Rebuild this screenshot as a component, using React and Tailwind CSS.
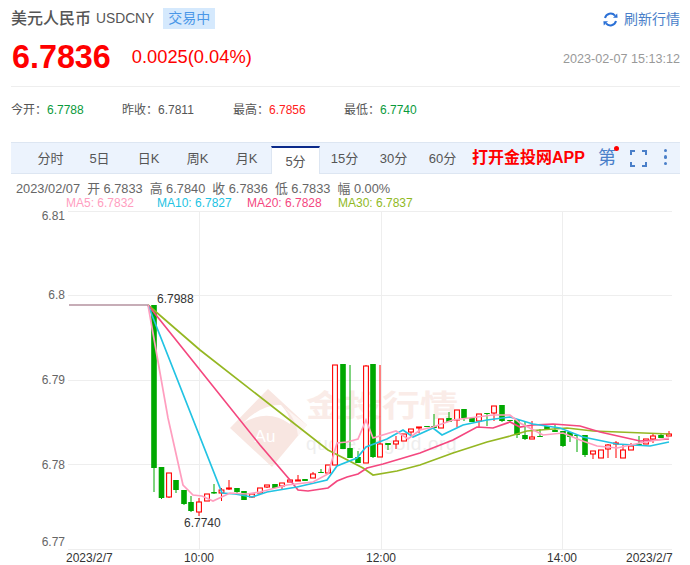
const FONT = "font-['Liberation_Sans','Noto_Sans_CJK_SC',sans-serif]";

// [x, g|r, bodyTop, bodyBottom, high, low]
const candles = [
  [154, 'g', 305, 468, 305, 492], [161.5, 'g', 467, 498, 467, 499], [169, 'r', 473, 497, 473, 498], [176, 'g', 480, 490, 480, 493],
  [184, 'g', 490, 504, 490, 505], [191, 'g', 502, 511, 496, 512], [199, 'r', 502, 512, 498, 516], [207, 'r', 494, 501, 494, 501],
  [214, 'g', 492, 493.5, 484, 494], [221.5, 'r', 490, 493, 488, 501], [229, 'r', 488, 489, 480, 490], [237, 'g', 488, 492, 488, 493],
  [244, 'g', 491, 500, 491, 500], [252, 'r', 494, 497, 494, 498], [260, 'r', 488, 493, 488, 493], [267, 'r', 485, 487, 485, 488],
  [275, 'g', 484, 488, 484, 488], [282, 'r', 483, 486, 483, 489], [290, 'r', 480, 482, 480, 482], [298, 'r', 480, 481, 475, 481],
  [305, 'g', 479, 481, 479, 481], [313, 'r', 474, 478, 472, 478], [321, 'g', 472, 473, 469, 473], [328, 'r', 465, 473, 465, 473],
  [335, 'r', 365, 465, 365, 465], [343, 'g', 364, 449, 364, 449], [350, 'g', 448, 458, 365, 458], [358, 'g', 457, 463, 451, 463],
  [366, 'r', 366, 463, 365, 463], [373, 'g', 364, 457, 364, 458], [380, 'r', 444, 457, 365, 457], [388, 'g', 443, 445, 443, 450],
  [396, 'r', 441, 444, 436, 449], [404, 'r', 434, 441, 434, 441], [411, 'r', 429, 432, 429, 437], [419, 'r', 427, 428, 427, 433],
  [427, 'g', 426, 427, 426, 427], [434, 'g', 426, 428, 414, 428], [441, 'r', 419, 428, 419, 428], [449, 'g', 418, 422, 412, 422],
  [457, 'r', 410, 420, 410, 427], [464, 'g', 409, 418, 409, 421], [472, 'g', 418, 422, 418, 422], [479, 'r', 414, 421, 414, 427],
  [487, 'g', 413, 414, 413, 426], [494, 'r', 406, 413, 406, 421], [502, 'g', 405, 421, 405, 422], [510, 'g', 420, 421, 420, 423],
  [517, 'g', 420, 435, 420, 438], [525, 'g', 435, 439, 421, 440], [532, 'r', 437, 439, 421, 439], [540, 'g', 436, 437, 429, 437],
  [547, 'g', 426, 430, 426, 430], [555, 'g', 430, 432, 425, 432], [563, 'g', 431, 446, 431, 447], [570, 'g', 432, 437, 432, 442],
  [577, 'g', 435, 436, 435, 452], [585, 'g', 435, 455, 435, 457], [593, 'r', 451, 454, 451, 459], [601, 'r', 450, 458, 450, 458],
  [608, 'r', 445, 449, 444, 458], [616, 'r', 443, 444, 441, 458], [623, 'r', 450, 458, 445, 458], [631, 'r', 446, 450, 443, 450],
  [639, 'g', 444, 445, 436, 445], [646, 'r', 439, 444, 439, 444], [653, 'r', 436, 439, 433, 443], [661, 'g', 435, 438, 433, 438],
  [669, 'r', 434, 436, 431, 436],
];

const ma30 = '148,305 200,350 328,450 363,468 373,475 397,471 420,465 453,453 487,442 510,436 527,431 567,428 593,431 669,434';
const ma20 = '148,305 260,445 290,480 298,490 308,491 328,488 337,481 347,477 358,474 367,468 383,464 420,453 453,440 477,427 493,428 510,422 520,427 533,425 553,424 580,426 600,432 640,441 669,439';
const ma10 = '148,305 222,493 235,494 252,497 267,492 297,487 327,480 337,466 357,458 366,447 387,439 403,430 413,437 433,428 442,435 463,425 487,420 510,417 533,424 560,428 583,437 617,444 650,446 669,442';
const ma5 = '148,305 168,418 183,485 193,495 202,496 213,501 230,493 247,494 260,492 287,485 313,482 328,474 337,443 347,442 358,439 366,420 373,438 396,431 408,439 420,430 433,427 453,420 477,417 493,415 510,415 520,423 543,435 563,433 580,440 597,446 617,448 640,443 669,438';

const tabs = ['分时', '5日', '日K', '周K', '月K', '5分', '15分', '30分', '60分'];

function Chart() {
  return (
    <svg width="690" height="355" viewBox="0 210 690 355" className="block">
      {/* 网格 */}
      {[211, 295, 380, 464, 549].map((y) => <line key={y} x1="68" x2="672" y1={y + 0.5} y2={y + 0.5} stroke="#eeeeee" />)}
      {[199, 381, 562].map((x) => <line key={x} x1={x + 0.5} x2={x + 0.5} y1="211" y2="549" stroke="#eeeeee" />)}

      {/* 水印 */}
      <g>
        <path d="M268 389 L307 425 L272 467 L230 428 Z" fill="#f8e6e1" />
        <path d="M243 423 Q262 404 281 405 Q291 416 290 424 Q268 408 243 423 Z" fill="#ffffff" />
        <path d="M281 405 L307 425 L298 436 Q296 416 281 405 Z" fill="#fdf5f3" />
        <text x="265" y="442" fontSize="17" fill="#ffffff" textAnchor="middle" fontFamily="Liberation Sans">Au</text>
        <text transform="translate(306 416) scale(1 0.78)" fontSize="38" fontWeight="700" fill="#faecE8" fontFamily="Noto Sans CJK SC">金投行情</text>
        <text x="306" y="450" fontSize="19" fill="#eeeeee" fontFamily="Liberation Sans" letterSpacing="0.6">quote.cngold.org</text>
      </g>

      {/* K线 */}
      {candles.map(([x, c, t, b, hi, lo]) => {
        const color = c === 'g' ? '#00a800' : '#ff0000';
        return (
          <g key={x}>
            <line x1={x} x2={x} y1={hi} y2={lo} stroke={color} strokeWidth="1" />
            {c === 'g'
              ? <rect x={x - 2.8} y={t} width="5.6" height={b - t} fill={color} />
              : <rect x={x - 2.4} y={t} width="4.8" height={b - t} fill="#ffffff" stroke={color} strokeWidth="1.1" />}
          </g>
        );
      })}

      {/* 均线 */}
      <polyline points={ma30} fill="none" stroke="#95b723" strokeWidth="1.7" />
      <polyline points={ma20} fill="none" stroke="#f4477f" strokeWidth="1.7" />
      <polyline points={ma10} fill="none" stroke="#22c3e3" strokeWidth="1.7" />
      <polyline points={ma5} fill="none" stroke="#ff9ebf" strokeWidth="1.7" />
      <line x1="69" x2="148" y1="305" y2="305" stroke="#b5929f" strokeWidth="1.7" />

      <g fontFamily="Liberation Sans" fontSize="12" fill="#666666" textAnchor="end">
        <text x="65" y="220">6.81</text>
        <text x="65" y="299">6.8</text>
        <text x="65" y="384">6.79</text>
        <text x="65" y="469">6.78</text>
        <text x="65" y="546">6.77</text>
      </g>
      <g fontFamily="Liberation Sans" fontSize="12" fill="#333333">
        <text x="157" y="303">6.7988</text>
        <text x="184" y="527">6.7740</text>
        <text x="66" y="562">2023/2/7</text>
        <text x="199" y="562" textAnchor="middle">10:00</text>
        <text x="381" y="562" textAnchor="middle">12:00</text>
        <text x="562" y="562" textAnchor="middle">14:00</text>
        <text x="626" y="562">2023/2/7</text>
      </g>
      <g fontFamily="Liberation Sans" fontSize="12">
        <text x="30" y="574" fill="#888888">MACD</text>
        <text x="75" y="574" fill="#00c8f0">DIF: 0.0000</text>
        <text x="166" y="574" fill="#e814c8">DEA: 0.0000</text>
        <text x="257" y="574" fill="#ff0000">MACD: 0.000</text>
      </g>
    </svg>
  );
}

export default function App() {
  return (
    <div className={`w-[690px] h-[565px] overflow-hidden bg-white ${FONT}`}>
      <div className="flex items-center h-[21px] mt-2 ml-[11px] mr-[10px]">
        <span className="pt-px text-base font-medium text-[#555]">美元人民币</span>
        <span className="pt-px ml-[5px] text-[13.8px] text-[#555]">USDCNY</span>
        <span className="ml-[9px] px-[5px] h-[21px] leading-[21px] bg-[#d5e9fd] text-sm text-[#4a97e8]">交易中</span>
        <span className="ml-auto flex items-center gap-[6px] pt-px text-sm text-[#4a7fc9]">
          <svg width="15" height="15" viewBox="0 0 15 15" fill="none">
            <path d="M2 6 A5.8 5.8 0 0 1 12 3.6" stroke="#2a70d6" strokeWidth="2" />
            <path d="M13 9 A5.8 5.8 0 0 1 3 11.4" stroke="#2a70d6" strokeWidth="2" />
            <path d="M10 5.8 L14.6 5.8 L14.2 1.6 Z" fill="#2a70d6" />
            <path d="M5 9.2 L0.4 9.2 L0.8 13.4 Z" fill="#2a70d6" />
          </svg>
          刷新行情
        </span>
      </div>

      <div className="flex items-center h-[40px] mt-2 ml-3 mr-[10px]">
        <span className="text-[32.3px] font-bold text-[#ff0000] leading-none">6.7836</span>
        <span className="ml-[21px] text-[18.3px] text-[#ff0000]">0.0025(0.04%)</span>
        <span className="ml-auto mt-[5px] text-[12.6px] text-[#999]">2023-02-07 15:13:12</span>
      </div>

      <div className="h-px bg-[#eeeeee] mt-[9px] ml-[11px] mr-[10px]" />

      <div className="flex items-center h-[14px] mt-4 ml-[11px] text-xs text-[#555]">
        <span className="w-[111px]">今开：<span className="text-[#0a9a3c]">6.7788</span></span>
        <span className="w-[111px]">昨收：<span>6.7811</span></span>
        <span className="w-[111px]">最高：<span className="text-[#ff2020]">6.7856</span></span>
        <span>最低：<span className="text-[#0a9a3c]">6.7740</span></span>
      </div>

      <div className="flex items-stretch h-[32px] mt-[25px] ml-[11px] mr-[10px] pl-[15px] bg-[#ecf3fd] border-y border-[#dde6f2]">
        {tabs.map((t) => (
          <span
            key={t}
            className={t === '5分'
              ? 'w-[49px] flex items-center justify-center text-[13px] text-[#555] bg-white border-t-2 border-[#0b2a8a] border-x border-x-[#dde6f2] -mb-px mt-[3px] pt-[2px]'
              : 'w-[49px] flex items-center justify-center text-[13px] text-[#555] pt-px'}
          >
            {t}
          </span>
        ))}
        <span className="ml-[5px] self-center text-base font-bold text-[#ff0000]">打开金投网APP</span>
        <span className="relative ml-[13px] self-center text-lg leading-none text-[#4a7fc9]">
          第
          <span className="absolute -top-[3px] -right-[3px] w-[5px] h-[5px] rounded-full bg-[#ff0000]" />
        </span>
        <svg className="ml-[14px] self-center" width="17" height="17" viewBox="0 0 17 17" fill="none" stroke="#4a7fc9" strokeWidth="2">
          <path d="M1 5 V1 H5 M12 1 H16 V5 M16 12 V16 H12 M5 16 H1 V12" />
        </svg>
        <span className="ml-[17px] self-center flex flex-col gap-[3px] -mt-[2px]">
          <span className="w-[3.5px] h-[3.5px] rounded-full bg-[#4a7fc9]" />
          <span className="w-[3.5px] h-[3.5px] rounded-full bg-[#4a7fc9]" />
          <span className="w-[3.5px] h-[3.5px] rounded-full bg-[#4a7fc9]" />
        </span>
      </div>

      <div className="mt-2 ml-4 h-[14px] leading-[14px] text-[12.8px] text-[#666] whitespace-pre">2023/02/07  开 6.7833  高 6.7840  收 6.7836  低 6.7833  幅 0.00%</div>
      <div className="flex h-[14px] leading-[14px] ml-[66px] text-xs">
        <span className="w-[91px] text-[#ff9ebf]">MA5: 6.7832</span>
        <span className="w-[90px] text-[#22c3e3]">MA10: 6.7827</span>
        <span className="w-[91px] text-[#f4477f]">MA20: 6.7828</span>
        <span className="text-[#90b91f]">MA30: 6.7837</span>
      </div>

      <Chart />
    </div>
  );
}
